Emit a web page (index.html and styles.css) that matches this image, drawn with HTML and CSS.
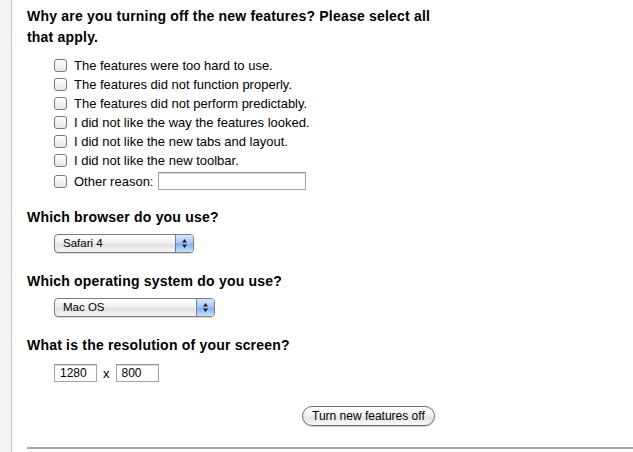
FILE: index.html
```html
<!DOCTYPE html>
<html>
<head>
<meta charset="utf-8">
<link rel="stylesheet" href="styles.css">
</head>
<body>
<div class="page">
  <div class="sidebar"></div>
  <div class="main">
    <form class="form">
      <h2 class="q q-first">Why are you turning off the new features? Please select all that apply.</h2>
      <ul class="options">
        <li><span class="cb"></span>The features were too hard to use.</li>
        <li><span class="cb"></span>The features did not function properly.</li>
        <li><span class="cb"></span>The features did not perform predictably.</li>
        <li><span class="cb"></span>I did not like the way the features looked.</li>
        <li><span class="cb"></span>I did not like the new tabs and layout.</li>
        <li><span class="cb"></span>I did not like the new toolbar.</li>
        <li class="other"><span class="cb"></span>Other reason:<span class="text-input wide"></span></li>
      </ul>
      <h2 class="q">Which browser do you use?</h2>
      <div class="field"><div class="select sel-browser"><span class="sel-label">Safari 4</span><span class="sel-arrow"><svg width="7" height="11" viewBox="0 0 7 11"><path d="M3.5 1 L6 4.5 L1 4.5 Z M3.5 10 L6 6.5 L1 6.5 Z" fill="#1a1a2a"/></svg></span></div></div>
      <h2 class="q">Which operating system do you use?</h2>
      <div class="field"><div class="select sel-os"><span class="sel-label">Mac OS</span><span class="sel-arrow"><svg width="7" height="11" viewBox="0 0 7 11"><path d="M3.5 1 L6 4.5 L1 4.5 Z M3.5 10 L6 6.5 L1 6.5 Z" fill="#1a1a2a"/></svg></span></div></div>
      <h2 class="q">What is the resolution of your screen?</h2>
      <div class="field res"><span class="text-input small">1280</span><span class="times">x</span><span class="text-input small">800</span></div>
      <div class="submit-row"><span class="button">Turn new features off</span></div>
    </form>
    <div class="rule"></div>
  </div>
</div>
</body>
</html>
```
FILE: styles.css
```css
html, body { margin: 0; padding: 0; background: #fff; }
body { font-family: "Liberation Sans", Arial, sans-serif; color: #000; width: 633px; height: 452px; overflow: hidden; }
.page { display: flex; height: 452px; }
.sidebar { width: 11px; background: #f3f3f3; border-right: 1px solid #a6cdf2; flex: none; }
.main { flex: 1; padding-left: 15px; display: flex; flex-direction: column; min-width: 0; }
.q { font-size: 14px; font-weight: bold; line-height: 20px; margin: 0; width: 430px; letter-spacing: 0.2px; }
.q-first { margin-top: 6px; line-height: 21px; }
.options { list-style: none; margin: 8px 0 0 0; padding: 0 0 0 27px; font-size: 13px; }
.options li { display: flex; align-items: center; height: 19px; }
.options li.other { height: 24px; margin-top: -1px; }
.cb { width: 11px; height: 11px; border: 1px solid #7a7a7a; border-radius: 3px; background: linear-gradient(#fdfdfd, #e6e6e6); margin-right: 7px; flex: none; box-shadow: inset 0 1px 0 #fff; }
.text-input { display: inline-flex; align-items: center; border: 1px solid #a5a5a5; border-top-color: #8f8f8f; box-shadow: inset 0 1px 1px #ddd; background: #fff; height: 16px; font-family: "Liberation Sans", Arial, sans-serif; font-size: 12px; padding-left: 5px; box-sizing: content-box; }
.text-input.wide { width: 141px; margin-left: 4px; }
.text-input.small { width: 36px; }
.options + .q { margin-top: 14px; }
.field { padding-left: 27px; margin: 7px 0 18px; display: flex; align-items: center; }
.select { display: flex; height: 17px; border: 1px solid #7d7d7d; border-radius: 4px; background: linear-gradient(#ffffff, #f0f0f0 45%, #e2e2e2 55%, #f4f4f4); overflow: hidden; font-size: 11.5px; box-shadow: 0 1px 1px rgba(0,0,0,0.15); }
.sel-browser { width: 138px; }
.sel-os { width: 159px; }
.sel-label { flex: 1; padding-left: 8px; line-height: 17px; }
.sel-arrow { width: 17px; border-left: 1px solid #6a7fb0; background: linear-gradient(#d6e6fb, #a9c9f2 45%, #86b2ef 55%, #c6e0ff); display: flex; align-items: center; justify-content: center; }
.field.res { margin: 9px 0 0; }
.times { font-size: 13px; margin: 0 6px; }
.submit-row { display: flex; padding-left: 275px; margin-top: 24px; }
.button { display: inline-block; font-size: 12px; line-height: 18px; padding: 0 9px; border: 1px solid #6c6c6c; border-radius: 10px; background: linear-gradient(#ffffff, #f2f2f2 50%, #e4e4e4 55%, #f8f8f8); box-shadow: 0 1px 1px rgba(0,0,0,0.2); }
.rule { margin-top: 21px; height: 2px; background: #a8a8a8; }
```
